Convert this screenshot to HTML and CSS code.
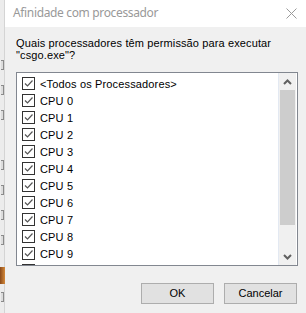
FILE: index.html
```html
<!DOCTYPE html>
<html lang="pt">
<head>
<meta charset="utf-8">
<link rel="stylesheet" href="styles.css">
</head>
<body>
<div class="screen">
  <div class="behind">
    <span class="mark m1"></span>
    <span class="mark m2"></span>
    <span class="mark m3"></span>
    <span class="mark m4"></span>
    <span class="mark m5"></span>
    <span class="mark m6"></span>
    <span class="mark m7"></span>
    <span class="orange"></span>
    <span class="mark m8"></span>
  </div>
  <div class="dialog">
    <div class="titlebar">
      <span class="title">Afinidade com processador</span>
      <svg class="close" width="11" height="11" viewBox="0 0 11 11"><path d="M0.5 0.5 L10.5 10.5 M10.5 0.5 L0.5 10.5" stroke="#9a9a9a" stroke-width="1" fill="none"/></svg>
    </div>
    <div class="body">
      <p class="question">Quais processadores têm permissão para executar<br>"csgo.exe"?</p>
      <div class="listbox">
        <ul class="items">
          <li class="item"><span class="cb"><svg width="11" height="11" viewBox="0 0 11 11"><path d="M2 5.5 L4.5 8 L9.5 2.5" stroke="#555" stroke-width="1.2" fill="none"/></svg></span><span class="label">&lt;Todos os Processadores&gt;</span></li>
          <li class="item"><span class="cb"><svg width="11" height="11" viewBox="0 0 11 11"><path d="M2 5.5 L4.5 8 L9.5 2.5" stroke="#555" stroke-width="1.2" fill="none"/></svg></span><span class="label">CPU 0</span></li>
          <li class="item"><span class="cb"><svg width="11" height="11" viewBox="0 0 11 11"><path d="M2 5.5 L4.5 8 L9.5 2.5" stroke="#555" stroke-width="1.2" fill="none"/></svg></span><span class="label">CPU 1</span></li>
          <li class="item"><span class="cb"><svg width="11" height="11" viewBox="0 0 11 11"><path d="M2 5.5 L4.5 8 L9.5 2.5" stroke="#555" stroke-width="1.2" fill="none"/></svg></span><span class="label">CPU 2</span></li>
          <li class="item"><span class="cb"><svg width="11" height="11" viewBox="0 0 11 11"><path d="M2 5.5 L4.5 8 L9.5 2.5" stroke="#555" stroke-width="1.2" fill="none"/></svg></span><span class="label">CPU 3</span></li>
          <li class="item"><span class="cb"><svg width="11" height="11" viewBox="0 0 11 11"><path d="M2 5.5 L4.5 8 L9.5 2.5" stroke="#555" stroke-width="1.2" fill="none"/></svg></span><span class="label">CPU 4</span></li>
          <li class="item"><span class="cb"><svg width="11" height="11" viewBox="0 0 11 11"><path d="M2 5.5 L4.5 8 L9.5 2.5" stroke="#555" stroke-width="1.2" fill="none"/></svg></span><span class="label">CPU 5</span></li>
          <li class="item"><span class="cb"><svg width="11" height="11" viewBox="0 0 11 11"><path d="M2 5.5 L4.5 8 L9.5 2.5" stroke="#555" stroke-width="1.2" fill="none"/></svg></span><span class="label">CPU 6</span></li>
          <li class="item"><span class="cb"><svg width="11" height="11" viewBox="0 0 11 11"><path d="M2 5.5 L4.5 8 L9.5 2.5" stroke="#555" stroke-width="1.2" fill="none"/></svg></span><span class="label">CPU 7</span></li>
          <li class="item"><span class="cb"><svg width="11" height="11" viewBox="0 0 11 11"><path d="M2 5.5 L4.5 8 L9.5 2.5" stroke="#555" stroke-width="1.2" fill="none"/></svg></span><span class="label">CPU 8</span></li>
          <li class="item"><span class="cb"><svg width="11" height="11" viewBox="0 0 11 11"><path d="M2 5.5 L4.5 8 L9.5 2.5" stroke="#555" stroke-width="1.2" fill="none"/></svg></span><span class="label">CPU 9</span></li>
          <li class="item"><span class="cb"><svg width="11" height="11" viewBox="0 0 11 11"><path d="M2 5.5 L4.5 8 L9.5 2.5" stroke="#555" stroke-width="1.2" fill="none"/></svg></span></li>
        </ul>
        <div class="scrollbar">
          <div class="arrow"><svg width="9" height="6" viewBox="0 0 9 6"><path d="M1 5 L4.5 1.5 L8 5" stroke="#606060" stroke-width="2" fill="none"/></svg></div>
          <div class="thumb"></div>
          <div class="track"></div>
          <div class="arrow"><svg width="9" height="6" viewBox="0 0 9 6"><path d="M1 1 L4.5 4.5 L8 1" stroke="#606060" stroke-width="2" fill="none"/></svg></div>
        </div>
      </div>
      <div class="buttons">
        <button class="btn">OK</button>
        <button class="btn">Cancelar</button>
      </div>
    </div>
  </div>
</div>
</body>
</html>
```
FILE: styles.css
```css
* { box-sizing: border-box; }
html, body { margin: 0; padding: 0; }
body {
  width: 306px;
  height: 313px;
  overflow: hidden;
  background: #f0f0f0;
  font-family: "Liberation Sans", Arial, sans-serif;
  font-size: 11px;
}
.screen {
  display: flex;
  width: 306px;
  height: 313px;
}
.behind {
  position: relative;
  width: 5px;
  flex: none;
  background: #ececec;
  border-right: 1px solid #d4d4d4;
}
.mark {
  position: absolute;
  left: 1px;
  width: 3px;
  height: 10px;
  border: 1px solid #8a8a8a;
  border-left: none;
  background: #dcdcdc;
}
.m1 { top: 60px; }
.m2 { top: 85px; }
.m3 { top: 110px; }
.m4 { top: 160px; }
.m5 { top: 185px; }
.m6 { top: 210px; }
.m7 { top: 235px; }
.m8 { top: 292px; }
.orange {
  position: absolute;
  left: 0;
  top: 267px;
  width: 5px;
  height: 17px;
  background: linear-gradient(90deg, #8a4a1a, #d4893a);
}
.dialog {
  flex: 1;
  display: flex;
  flex-direction: column;
  background: #f0f0f0;
}
.titlebar {
  height: 27px;
  flex: none;
  background: #fff;
  display: flex;
  align-items: center;
  justify-content: space-between;
  padding: 0 9px 0 8px;
}
.title {
  color: #999;
  font-family: "Noto Sans", sans-serif;
  font-size: 12px;
  letter-spacing: -0.35px;
  line-height: 14px;
  margin-top: -1px;
}
.close { display: block; margin-top: -1px; }
.body {
  padding: 9px 8px 0 11px;
  display: flex;
  flex-direction: column;
}
.question {
  margin: 0;
  color: #000;
  font-size: 11px;
  letter-spacing: 0.12px;
  line-height: 12px;
  height: 36px;
  padding-top: 1px;
  white-space: nowrap;
}
.listbox {
  display: flex;
  width: 282px;
  height: 194px;
  border: 1px solid #828790;
  background: #fff;
  overflow: hidden;
}
.items {
  flex: 1;
  list-style: none;
  margin: 0;
  padding: 2px 0 0 5px;
  border-right: 1px solid #e3e9f2;
}
.item {
  height: 17px;
  display: flex;
  align-items: center;
  color: #000;
  line-height: 13px;
}
.cb {
  width: 13px;
  height: 13px;
  border: 1px solid #333;
  background: #fff;
  display: flex;
  align-items: center;
  justify-content: center;
  flex: none;
  margin-right: 5px;
}
.cb svg { display: block; }
.label { white-space: nowrap; padding-top: 1px; letter-spacing: 0.15px; }
.scrollbar {
  width: 17px;
  flex: none;
  background: #f0f0f0;
  display: flex;
  flex-direction: column;
  padding: 0 1px;
  margin-right: 1px;
}
.arrow {
  height: 17px;
  flex: none;
  display: flex;
  align-items: center;
  justify-content: center;
}
.thumb {
  height: 135px;
  flex: none;
  background: #cdcdcd;
}
.track { flex: 1; }
.buttons {
  display: flex;
  justify-content: flex-end;
  gap: 10px;
  margin-top: 17px;
  padding-right: 1px;
}
.btn {
  width: 73px;
  height: 21px;
  background: #e1e1e1;
  border: 1px solid #adadad;
  border-radius: 0;
  font-family: "Liberation Sans", Arial, sans-serif;
  font-size: 11px;
  color: #000;
  padding: 0;
  line-height: 17px;
}
```
